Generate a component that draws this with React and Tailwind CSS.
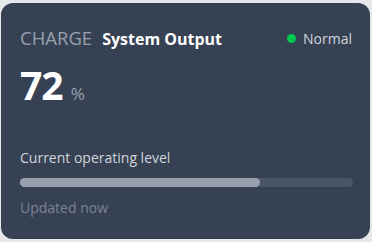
import React from 'react';

export default function App() {
    const level = 72;

    return (
        <div className="w-[372px] h-[242px] bg-gray-200 pt-[3px] pl-[1px]" style={{ fontFamily: '"Open Sans", "Noto Sans", sans-serif' }}>
            <div className="w-[369px] h-[236px] rounded-xl bg-gray-700 pl-[19px] pr-[17px] pt-[21px] flex flex-col">
                <div className="flex items-center justify-between h-7">
                    <div className="flex items-baseline gap-[10px]">
                        <span className="text-[18.5px] text-gray-400">CHARGE</span>
                        <span className="text-[16px] font-bold text-white">System Output</span>
                    </div>
                    <div className="flex items-center gap-[7px] pr-[1px]">
                        <span className="w-[9px] h-[9px] rounded-full bg-green-500" />
                        <span className="text-[14px] text-gray-300">Normal</span>
                    </div>
                </div>

                <div className="flex items-baseline gap-2 mt-[13px]">
                    <span className="text-[39px] leading-none font-bold text-white tracking-tight">72</span>
                    <span className="text-[17px] text-gray-400">%</span>
                </div>

                <p className="mt-[41px] text-[14px] leading-5 text-gray-300">Current operating level</p>
                <div className="mt-[10px] h-[9px] w-full rounded-full bg-gray-600">
                    <div className="h-full rounded-full bg-gray-400" style={{ width: `${level}%` }} />
                </div>
                <p className="mt-[11px] text-[14px] leading-5 text-[#7b8393]">Updated now</p>
            </div>
        </div>
    );
}
